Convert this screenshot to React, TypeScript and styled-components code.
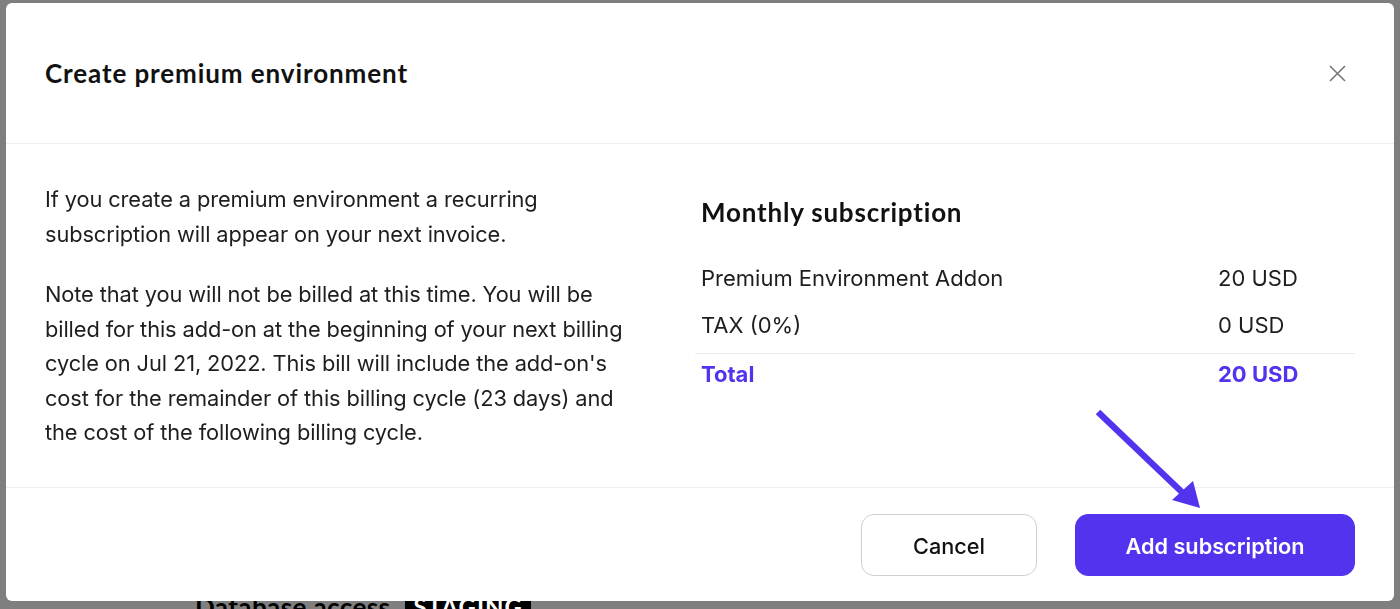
import React from "react";
import styled, { createGlobalStyle } from "styled-components";

const Global = createGlobalStyle`
  html, body { margin: 0; padding: 0; }
  body {
    background: #808080;
    font-family: "Inter", "Liberation Sans", sans-serif;
    overflow: hidden;
    height: 609px;
  }
  * { box-sizing: border-box; }
`;

const Page = styled.div`
  height: 609px;
  padding: 590px 0 0 195px;
  background: #7f7f7f;
`;

const SectionTitle = styled.div`
  display: flex;
  align-items: center;
  gap: 15px;
  font-family: "Lato", "Liberation Sans", sans-serif;
  font-weight: 700;
  font-size: 26px;
  line-height: 34px;
  letter-spacing: 0.4px;
  color: #000;
`;

const Badge = styled.span`
  background: #000;
  color: #fff;
  padding: 0 8px;
  font-size: 24px;
  letter-spacing: 1px;
`;

const Dialog = styled.div`
  position: fixed;
  left: 6px;
  top: 3px;
  width: 1388px;
  height: 598px;
  background: #fff;
  border-radius: 6px;
  display: flex;
  flex-direction: column;
`;

const Header = styled.header`
  height: 141px;
  flex: none;
  display: flex;
  align-items: center;
  justify-content: space-between;
  padding: 0 48px 0 39px;
  border-bottom: 1px solid #efefef;
`;

const Title = styled.h1`
  margin: 0;
  font-family: "Lato", "Liberation Sans", sans-serif;
  font-weight: 700;
  font-size: 26px;
  letter-spacing: 0.9px;
  color: #111;
`;

const CloseButton = styled.button`
  border: 0;
  background: none;
  padding: 0;
  width: 18px;
  height: 18px;
  display: flex;
  align-items: center;
  justify-content: center;
  color: #777;
  cursor: pointer;
`;

const Body = styled.div`
  flex: 1;
  display: grid;
  grid-template-columns: 600px 1fr;
  column-gap: 50px;
  padding: 38px 39px 0 39px;
  border-bottom: 1px solid #f0f0f0;
`;

const Paragraph = styled.p`
  margin: 0 0 26px;
  font-size: 21.8px;
  line-height: 34.5px;
  color: #1e1e1e;
  letter-spacing: -0.1px;
  max-width: 595px;
`;

const Summary = styled.div`
  padding-top: 15px;
`;

const SummaryTitle = styled.h2`
  margin: 0 0 27px 6px;
  font-family: "Lato", "Liberation Sans", sans-serif;
  font-weight: 700;
  font-size: 26px;
  letter-spacing: 0.8px;
  line-height: 30px;
  color: #111;
`;

const Row = styled.div<{ $total?: boolean }>`
  display: grid;
  grid-template-columns: 1fr 137px;
  align-items: center;
  height: ${(p) => (p.$total ? "40px" : "47px")};
  padding-left: 6px;
  margin-top: ${(p) => (p.$total ? "5px" : "0")};
  border-top: ${(p) => (p.$total ? "1px solid #ececec" : "none")};
  font-size: 22px;
  font-weight: ${(p) => (p.$total ? 700 : 400)};
  color: ${(p) => (p.$total ? "#5333ed" : "#1e1e1e")};
`;

const Footer = styled.footer`
  height: 113px;
  flex: none;
  display: flex;
  justify-content: flex-end;
  align-items: flex-start;
  gap: 38px;
  padding: 26px 39px 0 0;
  position: relative;
`;

const Button = styled.button<{ $primary?: boolean }>`
  height: 62px;
  width: ${(p) => (p.$primary ? "280px" : "176px")};
  border-radius: 13px;
  border: 1px solid ${(p) => (p.$primary ? "#5333ed" : "#cfcfcf")};
  background: ${(p) => (p.$primary ? "#5333ed" : "#fff")};
  color: ${(p) => (p.$primary ? "#fff" : "#111")};
  font-family: "Inter", "Liberation Sans", sans-serif;
  font-size: 21.7px;
  font-weight: ${(p) => (p.$primary ? 600 : 500)};
  padding-top: 2px;
  cursor: pointer;
`;

const Annotation = styled.svg`
  position: absolute;
  left: 1079px;
  top: 395px;
  width: 130px;
  height: 120px;
  pointer-events: none;
`;

export default function App() {
  return (
    <>
      <Global />
      <Page>
        <SectionTitle>
          Database access <Badge>STAGING</Badge>
        </SectionTitle>
      </Page>
      <Dialog role="dialog">
        <Header>
          <Title>Create premium environment</Title>
          <CloseButton aria-label="Close">
            <svg width="17" height="17" viewBox="0 0 17 17">
              <path d="M1 1 L16 16 M16 1 L1 16" stroke="currentColor" strokeWidth="1.6" fill="none" />
            </svg>
          </CloseButton>
        </Header>
        <Body>
          <div>
            <Paragraph>
              If you create a premium environment a recurring subscription will appear on your next invoice.
            </Paragraph>
            <Paragraph>
              Note that you will not be billed at this time. You will be billed for this add-on at the beginning of
              your next billing cycle on Jul 21, 2022. This bill will include the add-on's cost for the remainder of
              this billing cycle (23 days) and the cost of the following billing cycle.
            </Paragraph>
          </div>
          <Summary>
            <SummaryTitle>Monthly subscription</SummaryTitle>
            <Row>
              <span>Premium Environment Addon</span>
              <span>20 USD</span>
            </Row>
            <Row>
              <span>TAX (0%)</span>
              <span>0 USD</span>
            </Row>
            <Row $total>
              <span>Total</span>
              <span>20 USD</span>
            </Row>
          </Summary>
        </Body>
        <Footer>
          <Button>Cancel</Button>
          <Button $primary>Add subscription</Button>
        </Footer>
        <Annotation viewBox="0 0 130 120">
          <path d="M13 14 L101 98" stroke="#5333ed" strokeWidth="6.5" fill="none" />
          <path d="M115 110 L87 102 L108 83 Z" fill="#5333ed" />
        </Annotation>
      </Dialog>
    </>
  );
}
